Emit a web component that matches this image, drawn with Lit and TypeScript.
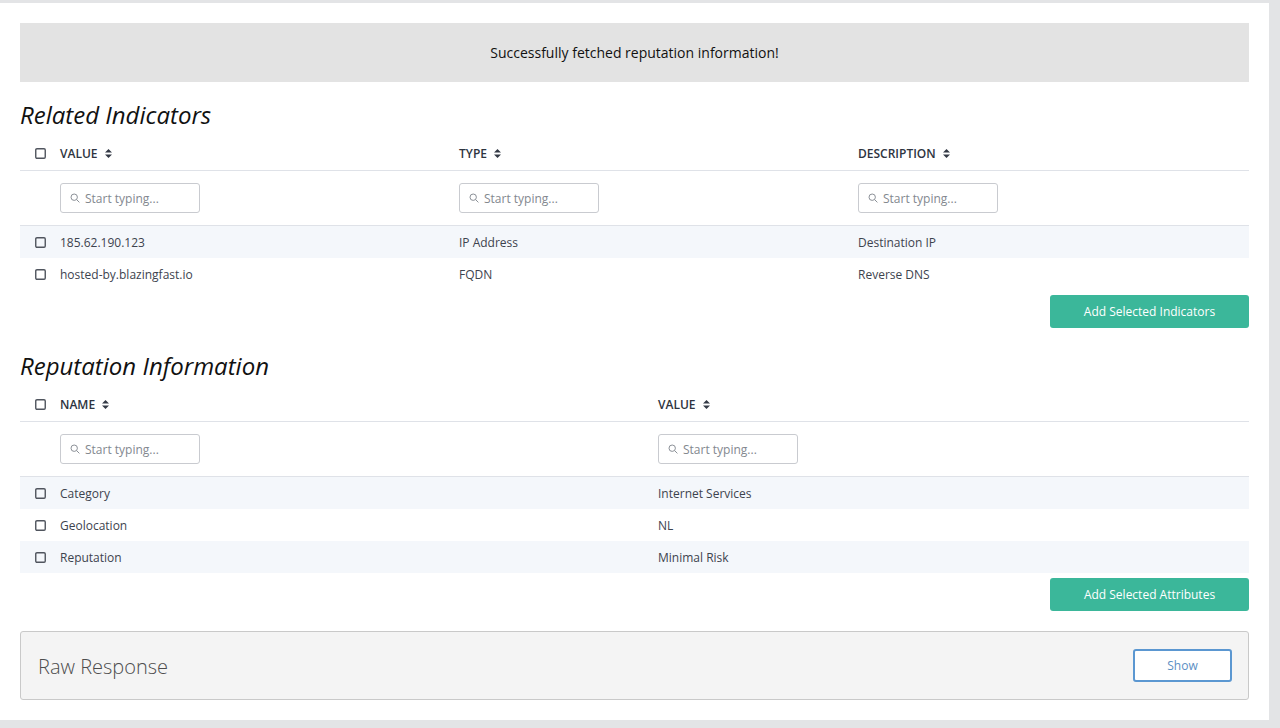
import { LitElement, html, css } from "lit";
import { customElement } from "lit/decorators.js";

const check = html`<svg class="cb" width="11" height="11" viewBox="0 0 11 11" fill="none"><rect x=".75" y=".75" width="9.5" height="9.5" rx="1.2" stroke="#50555e" stroke-width="1.4"/></svg>`;
const sort = html`<svg class="sort" width="7" height="9" viewBox="0 0 7 9"><path d="M3.5 0 7 3.6H0ZM0 5.4h7L3.5 9Z" fill="#343a46"/></svg>`;
const searchIcon = html`<svg class="si" width="10" height="10" viewBox="0 0 10 10" fill="none" stroke="#8b9097" stroke-width="1"><circle cx="4.2" cy="4.2" r="3.2"/><path d="M6.6 6.6 9.4 9.4"/></svg>`;

@customElement("app-root")
export class AppRoot extends LitElement {
  static styles = css`
    :host { display: block; width: 1280px; height: 728px; background: #e3e4e6; padding-top: 3px; box-sizing: border-box; overflow: hidden; font-family: "Open Sans", sans-serif; color: #343a46; }
    .panel { width: 1269px; height: 717px; background: #fff; padding: 20px 20px 0; box-sizing: border-box; }
    .banner { width: 1229px; height: 59px; background: #e3e3e3; color: #111; font-size: 14px; display: flex; align-items: center; justify-content: center; }
    .wrap { width: 1229px; }
    h2 { margin: 0; box-sizing: border-box; line-height: 33px; font-size: 24px; font-weight: 400; font-style: italic; color: #111; }
    .heading-a { height: 55px; padding-top: 16px; }
    .heading-b { height: 60px; padding-top: 21px; }
    .row { display: grid; align-items: center; }
    .three { grid-template-columns: 40px 399px 399px 391px; }
    .two { grid-template-columns: 40px 598px 591px; }
    .head { height: 33px; border-bottom: 1px solid #dfe2e8; font-size: 12px; font-weight: 600; color: #2e3440; }
    .head span.l { display: inline-flex; align-items: center; gap: 7px; }
    .filters { height: 54px; border-bottom: 1px solid #dfe2e8; }
    .input { width: 140px; height: 30px; box-sizing: border-box; border: 1px solid #c9cbd0; border-radius: 3px; display: flex; align-items: center; gap: 5px; padding-left: 9px; font-size: 12px; color: #83888f; background: #fff; }
    .body { height: 32px; font-size: 12px; color: #3d434e; }
    .odd { background: #f4f7fb; }
    .cb { display: block; margin-left: 15px; }
    .actions { display: flex; justify-content: flex-end; padding-top: 5px; }
    .add { width: 199px; height: 33px; border: 0; border-radius: 3px; background: #3bb79a; color: #fff; font: 500 12px "Open Sans", sans-serif; display: flex; align-items: center; justify-content: center; padding: 0; }
    .raw { margin-top: 20px; width: 1229px; height: 69px; box-sizing: border-box; background: #f4f4f4; border: 1px solid #c9c9c9; border-radius: 3px; display: flex; align-items: center; justify-content: space-between; padding: 0 16px 0 17px; }
    .raw-title { font-size: 20px; font-weight: 300; color: #4d4d4d; padding-top: 2px; }
    .show { width: 99px; height: 33px; box-sizing: border-box; background: #fff; border: 2px solid #5b97d1; border-radius: 3px; color: #5b8fc4; font: 400 12px "Open Sans", sans-serif; padding: 0; }
  `;

  private head(cls: string, labels: string[]) {
    return html`<div class="row head ${cls}">${check}${labels.map((l) => html`<div><span class="l">${l}${sort}</span></div>`)}</div>`;
  }
  private filters(cls: string, n: number) {
    return html`<div class="row filters ${cls}"><div></div>${Array.from({ length: n }, () => html`<div><div class="input">${searchIcon}<span>Start typing...</span></div></div>`)}</div>`;
  }
  private rows(cls: string, data: string[][]) {
    return data.map((r, i) => html`<div class="row body ${cls} ${i % 2 === 0 ? "odd" : ""}">${check}${r.map((c) => html`<div>${c}</div>`)}</div>`);
  }

  render() {
    return html`<div class="panel">
      <div class="banner">Successfully fetched reputation information!</div>
      <div class="wrap">
        <h2 class="heading-a">Related Indicators</h2>
        ${this.head("three", ["VALUE", "TYPE", "DESCRIPTION"])}
        ${this.filters("three", 3)}
        ${this.rows("three", [["185.62.190.123", "IP Address", "Destination IP"], ["hosted-by.blazingfast.io", "FQDN", "Reverse DNS"]])}
        <div class="actions"><button class="add">Add Selected Indicators</button></div>
        <h2 class="heading-b">Reputation Information</h2>
        ${this.head("two", ["NAME", "VALUE"])}
        ${this.filters("two", 2)}
        ${this.rows("two", [["Category", "Internet Services"], ["Geolocation", "NL"], ["Reputation", "Minimal Risk"]])}
        <div class="actions"><button class="add">Add Selected Attributes</button></div>
        <div class="raw"><span class="raw-title">Raw Response</span><button class="show">Show</button></div>
      </div>
    </div>`;
  }
}
